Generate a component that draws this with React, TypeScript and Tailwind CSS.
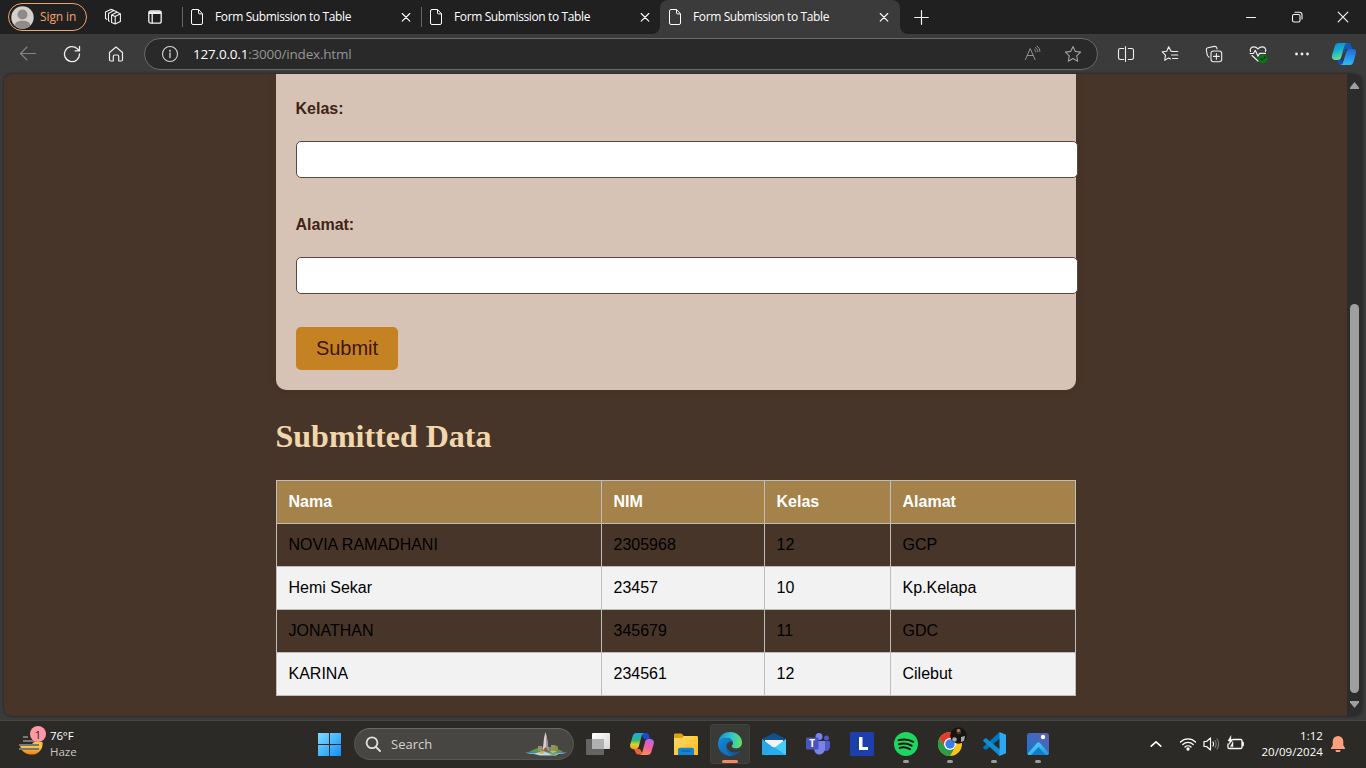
import React from "react";

const UI = "font-['Open_Sans',sans-serif]";

function Line({ size = 16, w = 1.1, className = "", children }: { size?: number; w?: number; className?: string; children: React.ReactNode }) {
  return (
    <svg width={size} height={size} viewBox={`0 0 ${size} ${size}`} fill="none" stroke="currentColor" strokeWidth={w} strokeLinecap="round" strokeLinejoin="round" className={`block shrink-0 ${className}`}>
      {children}
    </svg>
  );
}

function CloseIcon() {
  return (
    <Line size={10} w={1.1}>
      <path d="M1.200 1.500l7.600 7.600M8.800 1.500L1.200 9.100" />
    </Line>
  );
}

function Tab({ active = false, divider = false }: { active?: boolean; divider?: boolean }) {
  return (
    <div className={`relative flex h-[34px] items-center text-white ${active ? "w-[240px] rounded-t-lg bg-[#3b3b3b]" : "w-[239px]"}`}>
      {divider && <span className="absolute left-0 top-[7px] h-5 w-px bg-[#666]" />}
      {active && (
        <>
          <svg className="absolute -left-2 bottom-0" width="8" height="8"><path d="M8 0v8H0a8 8 0 0 0 8-8z" fill="#3b3b3b" /></svg>
          <svg className="absolute -right-2 bottom-0" width="8" height="8"><path d="M0 0v8h8a8 8 0 0 1-8-8z" fill="#3b3b3b" /></svg>
        </>
      )}
      <svg width="12" height="16" viewBox="0 0 12 16" fill="none" stroke="#fff" className="ml-[9px] shrink-0">
        <path d="M2 .5h5.500l4 4.300V14a1.500 1.500 0 0 1-1.500 1.500H2A1.500 1.500 0 0 1 .5 14V2A1.500 1.500 0 0 1 2 .5zM7.500.7v3.200c0 .6.4 1 1 1h3" />
      </svg>
      <span className="ml-3 w-[160px] whitespace-nowrap text-[12px] leading-4 tracking-[-0.380px]">Form Submission to Table</span>
      <span className={active ? "ml-auto mr-[11px]" : "ml-auto mr-[10px]"}><CloseIcon /></span>
    </div>
  );
}

function TabStrip() {
  return (
    <div className="flex h-[34px] items-center bg-[#202020] text-[#f2f2f2]">
      <div className="ml-2 flex h-7 w-[79px] shrink-0 items-center rounded-full border border-[#f2a26b] pl-[2px] text-[#f2a26b]">
        <svg width="23" height="23" viewBox="0 0 23 23">
          <circle cx="11.500" cy="11.500" r="11.200" fill="#d3d1ce" />
          <circle cx="11.500" cy="8.500" r="5" fill="#8f8b88" />
          <path d="M3.800 19.600c0-3.300 3-4.800 7.700-4.800s7.700 1.500 7.700 4.800a11.200 11.200 0 0 1-15.400 0z" fill="#8f8b88" />
        </svg>
        <span className="ml-[6px] whitespace-nowrap text-[12px] leading-4 tracking-[-0.100px]">Sign in</span>
      </div>
      <div className="ml-[17px] w-[18px]">
        <Line size={18}>
          <path d="M7.600 7l5.200-2.700 3.600 1.400v7.800L11.200 16l-3.600-1.500zM7.600 7l3.600 1.400L16.400 5.700M11.200 8.400V16" />
          <path d="M5.400 13.200L4.500 12.800V5.400L9.800 2.600l3 1.100M2.800 11.200L1.500 10.500V4L6.800 1.400l2.500.7" />
        </Line>
      </div>
      <div className="ml-[26px] mr-5">
        <Line size={14} w={1.300}>
          <rect x=".8" y=".8" width="12.400" height="12.400" rx="2" />
          <path d="M1.500 2h11M1.500 3.300h11" strokeWidth="1.500" />
          <path d="M4.200 4v9" />
        </Line>
      </div>
      <div className="flex">
        <Tab divider />
        <Tab divider />
        <Tab active />
      </div>
      <div className="ml-[14px]">
        <Line size={15} w={1.200}><path d="M7.500.7v13.600M.7 7.500h13.600" /></Line>
      </div>
      <div className="ml-auto flex">
        <div className="flex w-[46px] justify-center"><Line size={12} w={1}><path d="M1.500 6.500h9" /></Line></div>
        <div className="flex w-[46px] justify-center">
          <Line size={12}><rect x="1.500" y="3.500" width="7.500" height="7.500" rx="1.500" /><path d="M4 1.300h4.500a2.500 2.500 0 0 1 2.500 2.500V8" /></Line>
        </div>
        <div className="flex w-[46px] justify-center"><Line size={12} w={1.200}><path d="M1.200 1.200l9.600 9.600M10.800 1.200L1.200 10.800" /></Line></div>
      </div>
    </div>
  );
}

function CopilotEdge() {
  return (
    <svg width="26" height="24" viewBox="0 0 26 24" className="block">
      <defs>
        <linearGradient id="ceA" x1="0" y1="0" x2=".3" y2="1"><stop offset="0" stopColor="#0b86d4" /><stop offset=".5" stopColor="#16aed0" /><stop offset="1" stopColor="#6bdc91" /></linearGradient>
        <linearGradient id="ceB" x1=".5" y1="0" x2=".4" y2="1"><stop offset="0" stopColor="#2469d8" /><stop offset="1" stopColor="#29bdf5" /></linearGradient>
      </defs>
      <path d="M13 1h4.500c1.500 0 2.200 1 2.600 2.300L21.300 7H14.500l-2 6z" fill="#0b5cb8" />
      <path d="M7 18h4l1.200 5H9.500c-1.600 0-2.300-1.200-2.600-2.500z" fill="#1747d0" />
      <path d="M7.500 1H16c-1.500.4-2.200 1.500-2.600 3L10.300 15c-.5 1.800-1.600 3-3.500 3H4.200C1.500 18 .4 15.800 1.100 13L3.800 4C4.300 2 5.500 1 7.500 1z" fill="url(#ceA)" />
      <path d="M19 7h2.500c3 0 4 2 3.300 4.800l-2.500 8.700c-.6 1.700-1.700 2.500-3.300 2.500H9.500c1.500-.4 2.300-1.500 2.700-3l3.200-10.300C16 8 17 7 19 7z" fill="url(#ceB)" />
    </svg>
  );
}

function Toolbar() {
  return (
    <div className="flex h-10 items-center bg-[#3b3b3b] text-[#eee]">
      <div className="ml-[6px] flex w-11 justify-center text-[#858585]">
        <Line size={18}><path d="M16.500 8.500H1.500M8 2L1.500 8.500 8 15" /></Line>
      </div>
      <div className="flex w-11 justify-center">
        <Line size={18} w={1.300}><path d="M16.500 8.800A7.500 7.500 0 1 1 14.300 3.800L16.300 5.700M16.500 1.500v4.400h-4.400" /></Line>
      </div>
      <div className="flex w-11 justify-center">
        <Line size={18} w={1.200}><path d="M2.500 7.500L9 2l6.500 5.500v7.300c0 .8-.5 1.200-1.200 1.200h-2.600v-4.500c0-1-.5-1.500-1.400-1.500H7.700c-.9 0-1.400.5-1.400 1.500V16H3.700c-.7 0-1.200-.4-1.200-1.200z" /></Line>
      </div>
      <div className="ml-[6px] flex h-8 w-[954px] items-center rounded-full border border-[#6a6a6a] bg-[#292929]">
        <Line size={18} className="ml-4 text-[#d5d5d5]"><circle cx="9" cy="9" r="7.500" /><path d="M9 8v4.500" strokeWidth="1.300" /><circle cx="9" cy="5.700" r=".4" /></Line>
        <span className="ml-[14px] whitespace-nowrap text-[13.500px] leading-5 tracking-[-0.200px] text-[#959595]"><span className="text-white">127.0.0.1</span>:3000/index.html</span>
        <Line size={18} w={1} className="ml-auto mr-[22px] text-[#929292]">
          <path d="M1.500 14.500L6.200 3.500 11 14.500M3.200 10.500h6M10.300 4.500c.9.500 1.400 1.500 1.400 2.500M11.500 2.700c1.500.8 2.300 2.300 2.300 4M13 1.200c1.800 1.100 2.900 3 2.900 5.200" />
        </Line>
        <Line size={18} className="mr-[15px] text-[#a0a0a0]"><path d="M9 1.500l2.300 4.900 5.300.7-3.900 3.700 1 5.400L9 13.500l-4.700 2.700 1-5.400L1.400 7.100l5.300-.7z" /></Line>
      </div>
      <div className="ml-[6px] flex w-11 justify-center">
        <Line size={18}><path d="M6.700 3.500H3.300c-1.100 0-1.800.7-1.800 1.700v7.600c0 1 .7 1.700 1.800 1.700h3.400M11.300 3.500h3.400c1.100 0 1.800.7 1.800 1.700v7.600c0 1-.7 1.700-1.800 1.700h-3.400M8.500 1.500v15" /></Line>
      </div>
      <div className="flex w-11 justify-center">
        <Line size={18}><path d="M11.500 6.500l-1.600-.4L7.700 1.700 5.700 6.200l-4.500.6 3.300 3.400-.8 5.100 4-2.400 1.800 1M11.500 6.500h5.300M10.500 10h6.300M11.500 13.500h5.300" /></Line>
      </div>
      <div className="flex w-11 justify-center">
        <Line size={18}><rect x="6" y="6" width="10.700" height="10.700" rx="2.500" /><path d="M11.400 8.500v5.700M8.500 11.400h5.800M4 12.200L2.900 11c-.5-.6-.6-1-.8-1.900L1.300 5c-.2-1.200.3-2 1.500-2.300l6.500-1.300c1.400-.2 2.200.3 2.500 1.500l.2 1" /></Line>
      </div>
      <div className="flex w-11 justify-center">
        <Line size={20} w={1.200}>
          <path d="M2.500 7.500C1.500 4.500 3.500 2.800 6 2.800c1.800 0 2.800.7 4 2 1.200-1.300 2.200-2 4-2 2.500 0 4.500 1.700 3.500 4.700M4 11.500L10 17M2 9.500h3.500L7.300 6.300l2.700 6 1.600-3h5.900" />
          <circle cx="14.800" cy="14.700" r="4.500" fill="#0e7318" stroke="#0e7318" strokeWidth=".5" /><path d="M12.800 14.700l1.400 1.300 3-3" stroke="#063a0c" />
        </Line>
      </div>
      <div className="flex w-11 justify-center">
        <svg width="16" height="4" fill="#eee"><circle cx="2.500" cy="2" r="1.400" /><circle cx="8" cy="2" r="1.400" /><circle cx="13.500" cy="2" r="1.400" /></svg>
      </div>
      <div className="ml-[7px]"><CopilotEdge /></div>
    </div>
  );
}

const rows = [
  ["NOVIA RAMADHANI", "2305968", "12", "GCP"],
  ["Hemi Sekar", "23457", "10", "Kp.Kelapa"],
  ["JONATHAN", "345679", "11", "GDC"],
  ["KARINA", "234561", "12", "Cilebut"],
];

function Page() {
  return (
    <div className="flex h-[646px] bg-[#3b3b3b] px-1 pb-1 font-['Liberation_Sans',Arial,sans-serif] text-[16px]">
      <div className="flex h-[642px] w-[1358px] overflow-hidden rounded-lg bg-[#483529] shadow-[0_0_3px_rgba(0,0,0,0.5)]">
        <div className="w-[1343px] pl-[272px]">
          <form className="h-[316px] w-[800px] rounded-b-[10px] bg-[#d7c3b6] pl-[19.500px] pt-[26px] font-bold leading-[18px] text-[#3e2415] shadow-[0_0_10px_rgba(0,0,0,0.1)]" onSubmit={(e) => e.preventDefault()}>
            <label className="block">Kelas:</label>
            <input className="ml-[0.500px] mt-[23px] block h-[37px] w-[782px] rounded-[5px] border border-[#5d4543] bg-white px-2" />
            <label className="mt-[37px] block pt-px">Alamat:</label>
            <input className="ml-[0.500px] mt-[23px] block h-[37px] w-[782px] rounded-[5px] border border-[#5d4543] bg-white px-2" />
            <button className="ml-[0.500px] mt-[33px] block h-[43px] w-[102px] rounded-[5px] bg-[#c58223] pb-[2px] text-[20px] font-normal text-[#3e1510]">Submit</button>
          </form>
          <h2 className="-ml-[0.500px] mt-[28px] h-[37px] font-['Liberation_Serif',serif] text-[32px] font-bold leading-[37px] text-[#f2d7ad]">Submitted Data</h2>
          <table className="mt-[25px] w-[799px] table-fixed border-collapse text-left text-black">
            <colgroup><col className="w-[325px]" /><col className="w-[163px]" /><col className="w-[126px]" /><col className="w-[185px]" /></colgroup>
            <thead>
              <tr className="h-[43px] bg-[#a4824a] text-white">
                {["Nama", "NIM", "Kelas", "Alamat"].map((h) => <th key={h} className="border border-[#bfbdbb] py-0 pl-[11.500px] pr-3 font-bold">{h}</th>)}
              </tr>
            </thead>
            <tbody>
              {rows.map((r) => (
                <tr key={r[0]} className="h-[43px] even:bg-[#f2f2f2]">
                  {r.map((c, i) => <td key={i} className="border border-[#bfbdbb] py-0 pl-[11.500px] pr-3">{c}</td>)}
                </tr>
              ))}
            </tbody>
          </table>
        </div>
        <div className="flex w-[15px] flex-col items-center bg-[#2c2c2c]">
          <svg width="9" height="7" className="mt-2" fill="#9f9f9f"><path d="M4.500 0L9 5.500V7H0V5.500z" /></svg>
          <div className="mt-[215px] h-[389px] w-[9px] rounded-full bg-[#9f9f9f]" />
          <svg width="9" height="7" className="mt-2" fill="#9f9f9f"><path d="M4.500 7L9 1.500V0H0v1.500z" /></svg>
        </div>
      </div>
    </div>
  );
}

function TaskItem({ children, running = false, active = false }: { children: React.ReactNode; running?: boolean; active?: boolean }) {
  return (
    <div className="flex h-[46px] w-11 items-center justify-center">
      <div className={`relative flex h-10 w-10 items-center justify-center rounded ${active ? "bg-[#3a3a36] shadow-[inset_0_0_0_1px_#42423e]" : ""}`}>
        {children}
        {active && <span className="absolute bottom-px left-3 h-[3px] w-4 rounded-full bg-[#f4866a]" />}
        {running && <span className="absolute bottom-px left-[17px] h-[3px] w-[6px] rounded-full bg-[#9c9c98]" />}
      </div>
    </div>
  );
}

function Svg24({ children }: { children: React.ReactNode }) {
  return <svg width="24" height="24" viewBox="0 0 24 24" className="block">{children}</svg>;
}

function Taskbar() {
  return (
    <div className="flex h-12 items-center border-t border-[#484842] bg-[#2b2a26] pb-px text-white">
      <div className="flex w-[317px] items-center">
        <div className="relative ml-[18px] h-8 w-7 -translate-y-[2px]">
          <svg width="28" height="32" viewBox="0 0 28 32">
            <defs><linearGradient id="sun" x1="0" y1=".4" x2="0" y2="1"><stop stopColor="#fbc438" /><stop offset="1" stopColor="#f17d18" /></linearGradient></defs>
            <path d="M2 19h12v-1l2-2h8.500a11.500 11.500 0 0 1-2.500 9 11 11 0 0 1-9.500 3.500C7 28 3 25 2 19z" fill="url(#sun)" />
            <path d="M5 11h5M5 15h13M1 19h20M1 23h20" stroke="#777" strokeWidth="2" />
          </svg>
          <span className="absolute left-3 top-0 flex h-4 w-4 items-center justify-center rounded-full bg-[#ff9aa5] text-[11px] leading-none text-[#222]">1</span>
        </div>
        <div className="ml-1 text-[11.500px] leading-4">
          <div className="tracking-[-0.150px]">76°F</div>
          <div className="text-[#c9c8c5]">Haze</div>
        </div>
      </div>
      <svg width="24" height="24" viewBox="0 0 24 24" className="block">
        <defs><linearGradient id="win" x1="0" y1="0" x2="1" y2="1"><stop stopColor="#80dcff" /><stop offset="1" stopColor="#0d91fa" /></linearGradient></defs>
        <path d="M1 1h11v11H1zM13 1h11v11H13zM1 13h11v11H1zM13 13h11v11H13z" fill="url(#win)" />
      </svg>
      <div className="ml-[13px] flex h-8 w-[220px] items-center rounded-full border border-[#555550] border-t-[#696965] bg-[#474642]">
        <Line size={16} w={1.800} className="ml-[10px] text-[#e2e2e0]"><circle cx="7" cy="6.800" r="5.400" /><path d="M11 11l4 4" /></Line>
        <span className="ml-[10px] text-[13px] leading-5 text-[#d4d3d0]">Search</span>
        <svg width="44" height="26" viewBox="0 0 44 26" className="ml-auto mr-[5px]">
          <path d="M1 21.500h42l-5 1.500H6z" fill="#6fb0dc" />
          <path d="M5 21q7-4 12-5h13q3 2 9 4.500-5 2.500-12 2z" fill="#5b9a45" />
          <path d="M10 23q9-4 14-1t12 0l-4 2.500H16z" fill="#b6d8ea" />
          <path d="M14 22q4-3 8-1.500l-4 2.500zM26 20q4-2 7 1l-5 1z" fill="#d3b456" />
          <path d="M20 7l1.500-6L23 7l1.700 13h-6z" fill="#ddd0cb" />
          <path d="M22 4l1 3 1.700 13H22z" fill="#a193a5" />
          <path d="M14 15h4v5h-4zM27 14h4v6h-4z" fill="#9e897c" />
          <path d="M18.500 20l3-4 4 5z" fill="#8d5d4d" /><circle cx="31.500" cy="17" r="2.500" fill="#839b40" />
        </svg>
      </div>
      <div className="ml-[2px] flex">
        <TaskItem>
          <Svg24>
            <defs><linearGradient id="tv" x1="0" y1="0" x2="1" y2="1"><stop stopColor="#fff" /><stop offset="1" stopColor="#d5d5d5" /></linearGradient></defs>
            <rect x="6" y="1" width="18" height="16" rx="1" fill="url(#tv)" /><rect y="7" width="18" height="16" rx="1" fill="#646464" /><path d="M6 7h12v10H6z" fill="#b0b0b0" />
          </Svg24>
        </TaskItem>
        <TaskItem>
          <Svg24>
            <defs>
              <linearGradient id="cpA" x1=".3" y1="0" x2=".3" y2="1"><stop stopColor="#1aa8ee" /><stop offset=".45" stopColor="#32b878" /><stop offset=".7" stopColor="#d8d32c" /><stop offset="1" stopColor="#f39b21" /></linearGradient>
              <linearGradient id="cpB" x1=".7" y1="0" x2=".4" y2="1"><stop stopColor="#b36ae8" /><stop offset=".5" stopColor="#ee609f" /><stop offset="1" stopColor="#fb8c55" /></linearGradient>
            </defs>
            <path d="M11 1h5c1.600 0 2.500.8 3 2.300L20 7h-6z" fill="#1b4bd1" /><path d="M4 17h6l3 5.500H8.500c-1.700 0-2.600-1-3.100-2.500z" fill="#ed6139" />
            <path d="M6.500 1H14c-1.300.5-2 1.500-2.400 3L8.800 14.500c-.5 1.700-1.600 2.700-3.300 2.700H4c-3 0-4.500-2-3.700-5L2.700 4C3.300 2 4.500 1 6.500 1z" fill="url(#cpA)" />
            <path d="M18.500 7H20c3 0 4.500 2 3.700 5l-2.400 8c-.6 2-1.800 3-3.800 3H10c1.300-.5 2-1.500 2.400-3l2.800-10.500C15.700 7.800 16.800 7 18.500 7z" fill="url(#cpB)" />
          </Svg24>
        </TaskItem>
        <TaskItem>
          <Svg24>
            <defs><linearGradient id="fo" x1="0" y1="0" x2="1" y2="1"><stop stopColor="#ffdb68" /><stop offset="1" stopColor="#ffb91f" /></linearGradient></defs>
            <path d="M0 3c0-1 .5-1.500 1.500-1.500h6L10 4v4H0z" fill="#dda10a" /><path d="M0 6h8l2-2h12.500C23.500 4 24 4.500 24 5.500V23H0z" fill="url(#fo)" />
            <path d="M4 23v-5c0-1.500.8-2.300 2.300-2.300h11.400c1.500 0 2.300.8 2.300 2.300v5z" fill="#1484d0" /><path d="M7.500 19h9" stroke="#0a62ab" strokeWidth="1.300" />
          </Svg24>
        </TaskItem>
        <TaskItem active>
          <Svg24>
            <defs>
              <linearGradient id="edA" x1="0" y1=".4" x2="1" y2=".5"><stop stopColor="#158fd2" /><stop offset=".55" stopColor="#2fc4cb" /><stop offset="1" stopColor="#65e15d" /></linearGradient>
              <linearGradient id="edB" x1="0" y1="0" x2="1" y2="1"><stop stopColor="#128edb" /><stop offset="1" stopColor="#0c4f9f" /></linearGradient>
            </defs>
            <path d="M0 11C.7 4.500 5.500 0 12 0c7 0 12 4.800 12 10.700 0 3.500-2.500 5.600-5.800 5.600-2.700 0-4.500-1-4.500-2.100 0-.8 1.300-1.200 1.300-3C15 8 12 6 8.500 6 4.500 6 1.500 8 0 11z" fill="url(#edA)" />
            <path d="M0 11c1.500-3.500 4.600-5 8.500-5 3.800 0 6.500 2.300 6.500 5-1-1.300-2.500-1.800-4-1C7.500 11.500 7.500 17 12 19.500c3.500 2 7.700 1 10.500-.7C20.300 22 16.500 24 12 24 5 24-.5 18 0 11z" fill="url(#edB)" />
            <path d="M11 10c-4.500 2-5 8.500-.5 12 1.500 1.200 3 1.800 4.500 1.800C10 24.500 5 21 5 15.500 5 12 8 9.500 11 10z" fill="#1878c4" />
          </Svg24>
        </TaskItem>
        <TaskItem>
          <Svg24>
            <path d="M0 7l12-6 12 6-3 7H3z" fill="#10528d" /><path d="M3 8h18v8H3z" fill="#f3f3f3" /><path d="M0 7l12 9-12 7z" fill="#27a6e8" /><path d="M24 7L12 16 0 23h24z" fill="#44cdf8" /><path d="M0 23l12-8 12 8z" fill="#27acee" />
          </Svg24>
        </TaskItem>
        <TaskItem>
          <Svg24>
            <circle cx="20.500" cy="6" r="2.500" fill="#5059c9" /><path d="M17 9h6.300c.5 0 .7.300.7.700V14c0 3-1.600 5-4 5h-3z" fill="#5059c9" />
            <circle cx="13" cy="4.500" r="3.500" fill="#7b83eb" /><path d="M8 9h10c.6 0 1 .4 1 1v6c0 4-2.500 6.500-5.700 6.500S8 20 8 16z" fill="#7b83eb" />
            <rect y="5.500" width="12.500" height="12" rx="1" fill="#4b53bc" /><text x="6.200" y="15" textAnchor="middle" fill="#fff" fontSize="10" fontWeight="700" fontFamily="Open Sans">T</text>
          </Svg24>
        </TaskItem>
        <TaskItem>
          <Svg24><path d="M0 0h24v24H0z" fill="#1d3fae" /><path d="M9 18l-2-1V6l2-1z" fill="#0c4d70" /><path d="M9 5h3.500v10H18v3H9z" fill="#fff" /></Svg24>
        </TaskItem>
        <TaskItem running>
          <Svg24><circle cx="12" cy="12" r="12" fill="#1ed760" /><path d="M4.500 8.300c5-1.500 10.300-1 14.800 1.500M5 12.200c4.300-1.200 8.800-.7 12.600 1.500M5.700 15.900c3.500-1 7-.6 10.300 1.300" fill="none" stroke="#191414" strokeWidth="2" strokeLinecap="round" /></Svg24>
        </TaskItem>
        <TaskItem running>
          <Svg24>
            <circle cx="12" cy="12" r="12" fill="#fbc51c" />
            <path d="M1.600 6A12 12 0 0 0 12 24l5.200-9L12 12 6.800 15z" fill="#2b9c48" />
            <path d="M22.400 6A12 12 0 0 0 1.600 6l5.200 9L12 6z" fill="#e33b2e" />
            <circle cx="12" cy="12" r="6" fill="#fff" /><circle cx="12" cy="12" r="4.700" fill="#397ee8" />
          </Svg24>
          <svg className="absolute left-5 top-[3px]" width="17" height="17" viewBox="0 0 17 17">
            <circle cx="8.500" cy="8.500" r="8.300" fill="#171411" /><path d="M6 3q3-3 5 0v4H7z" fill="#493429" /><circle cx="8.500" cy="3.500" r="1.600" fill="#b27b62" /><circle cx="4.500" cy="12.500" r="2.300" fill="#aaa" /><path d="M11 10l4-1-1 5-3 1z" fill="#aaa" />
          </svg>
        </TaskItem>
        <TaskItem running>
          <Svg24>
            <path d="M18 0v6.500L4.500 17.500c-.5.400-1 .4-1.500 0l-1.500-1.300c-.6-.5-.6-1 0-1.500L17 .5z" fill="#0077bd" /><path d="M18 24v-6.500L4.500 6.500c-.5-.4-1-.4-1.500 0L1.500 7.800c-.6.500-.6 1 0 1.500L17 23.500z" fill="#118bd4" /><path d="M17.500 0L24 2.800v18.400L17.500 24z" fill="#2ba9f1" />
          </Svg24>
        </TaskItem>
        <TaskItem running>
          <Svg24>
            <defs><linearGradient id="ph" x1="0" y1="1" x2="1" y2="0"><stop stopColor="#1975d2" /><stop offset="1" stopColor="#605eae" /></linearGradient><linearGradient id="mt" x1="0" y1="0" x2="1" y2="1"><stop stopColor="#5ddcfa" /><stop offset="1" stopColor="#1895e0" /></linearGradient></defs>
            <rect x="1" y="1" width="22" height="22" rx="2.500" fill="url(#ph)" /><path d="M1.500 22L11 11c1-1 2-1 3 0l9 10.500-1.500 1.500h-19z" fill="url(#mt)" /><path d="M5 23l7.500-8L20 23z" fill="#147bc8" /><circle cx="17" cy="5" r="2.200" fill="#fff" />
          </Svg24>
        </TaskItem>
      </div>
      <div className="ml-[90px] flex items-center">
        <Line size={12} w={1.600}><path d="M1.200 8.200L6 3.800l4.800 4.400" /></Line>
        <Line size={18} w={1.300} className="ml-[17px]">
          <path d="M1.500 7a10.500 10.500 0 0 1 15 0M3.800 9.500a7.400 7.400 0 0 1 10.400 0M6 12a4.300 4.300 0 0 1 6 0" /><circle cx="9" cy="14" r="1" fill="#fff" />
        </Line>
        <Line size={18} w={1.200} className="ml-[6px]">
          <path d="M1 6.500h2.500L7.500 3v12l-4-3.500H1zM10 7q1.300 2 0 4" /><path d="M12 5.500q2.400 3.500 0 7M14 4q3.300 5 0 10" stroke="#777" />
        </Line>
        <Line size={18} w={1.300} className="ml-[6px]">
          <path d="M6 4.500h7.700c.8 0 1.300.5 1.300 1.300v6.400c0 .8-.5 1.300-1.300 1.300H2.300c-.8 0-1.300-.5-1.300-1.300V9M15 7.500h1.200v3H15" /><path d="M3.800 1L1 6h2L2 9.500 6 4.500H4z" fill="#fff" strokeWidth=".5" /><path d="M3.500 11.500L6 6.500v5z" fill="#fff" strokeWidth=".4" />
        </Line>
        <div className="ml-[14px] w-[64px] whitespace-nowrap text-right text-[11.500px] leading-4 tracking-[0.050px]">
          <div>1:12</div><div>20/09/2024</div>
        </div>
        <svg width="14" height="16" viewBox="0 0 14 16" fill="#ff9e7c" className="ml-2"><path d="M7 0a5.300 5.300 0 0 1 5.300 5.300v3.900L14 12v1H0v-1l1.700-2.800V5.300A5.300 5.300 0 0 1 7 0zM4.500 14h5a2.500 2.500 0 0 1-5 0z" /></svg>
      </div>
    </div>
  );
}

export default function App() {
  return (
    <div className={`flex h-[768px] w-[1366px] flex-col overflow-hidden ${UI}`}>
      <TabStrip />
      <Toolbar />
      <Page />
      <Taskbar />
    </div>
  );
}
